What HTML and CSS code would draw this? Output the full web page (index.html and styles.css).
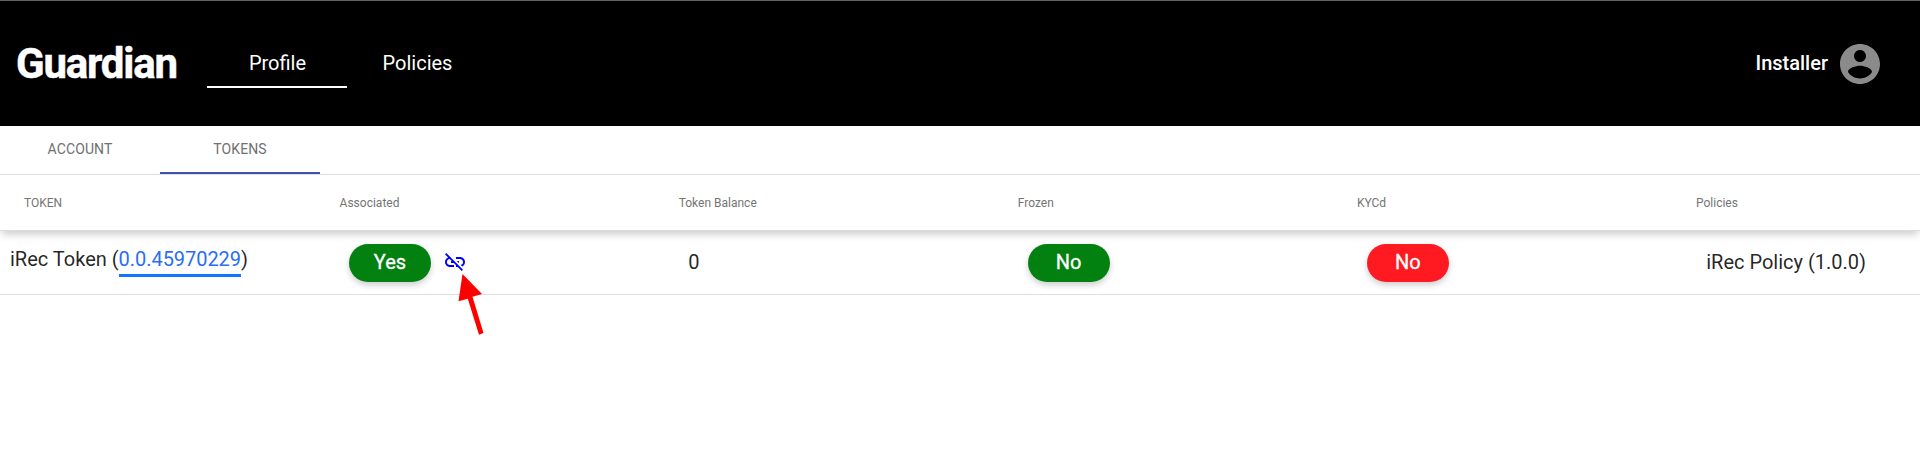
FILE: index.html
```html
<!DOCTYPE html>
<html lang="en">
<head>
<meta charset="utf-8">
<title>Guardian</title>
<link rel="stylesheet" href="styles.css">
</head>
<body>
<header class="topbar">
  <div class="brand">Guardian</div>
  <nav class="nav">
    <a class="nav-link active">Profile</a>
    <a class="nav-link">Policies</a>
  </nav>
  <div class="user">
    <span class="user-name">Installer</span>
    <svg class="avatar" viewBox="0 0 24 24"><path d="M12 2C6.48 2 2 6.48 2 12s4.48 10 10 10 10-4.48 10-10S17.52 2 12 2zm0 3c1.66 0 3 1.34 3 3s-1.34 3-3 3-3-1.34-3-3 1.34-3 3-3zm0 14.2c-2.5 0-4.71-1.28-6-3.22.03-1.99 4-3.08 6-3.08 1.99 0 5.97 1.09 6 3.08-1.29 1.94-3.5 3.22-6 3.22z"/></svg>
  </div>
</header>
<div class="tabs">
  <div class="tab">ACCOUNT</div>
  <div class="tab selected">TOKENS</div>
</div>
<main class="table">
  <div class="row head">
    <div class="th">TOKEN</div>
    <div class="th">Associated</div>
    <div class="th">Token Balance</div>
    <div class="th">Frozen</div>
    <div class="th">KYCd</div>
    <div class="th">Policies</div>
  </div>
  <div class="row body">
    <div class="td token"><span>iRec Token (<a class="token-id">0.0.45970229</a>)</span></div>
    <div class="td">
      <span class="pill yes">Yes</span>
      <span class="unlink">
        <svg class="unlink-icon" viewBox="0 0 24 24"><path d="M17 7h-4v1.9h4c1.71 0 3.1 1.39 3.1 3.1 0 1.43-.98 2.63-2.31 2.98l1.46 1.46C20.88 15.61 22 13.95 22 12c0-2.76-2.24-5-5-5zm-1 4h-2.19l2 2H16zM2 4.27l3.11 3.11C3.29 8.12 2 9.91 2 12c0 2.76 2.24 5 5 5h4v-1.9H7c-1.71 0-3.1-1.39-3.1-3.1 0-1.59 1.21-2.9 2.76-3.07L8.73 11H8v2h2.73L13 15.27V17h1.73l4.01 4L20 19.74 3.27 3 2 4.27z"/></svg>
        <svg class="pointer" viewBox="0 0 28 62"><path d="M4.5 0 L24 20 L14.5 22.8 L25.5 59 L21 60.8 L9.8 24.8 L.5 27.3z"/></svg>
      </span>
    </div>
    <div class="td text">0</div>
    <div class="td"><span class="pill yes">No</span></div>
    <div class="td"><span class="pill no">No</span></div>
    <div class="td text">iRec Policy (1.0.0)</div>
  </div>
</main>
</body>
</html>
```
FILE: styles.css
```css
* { box-sizing: border-box; }
body {
  margin: 0;
  min-height: 100vh;
  background: #fff;
  font-family: Roboto, "Liberation Sans", sans-serif;
  color: rgba(0, 0, 0, .87);
}
.topbar {
  display: flex;
  align-items: center;
  height: 126px;
  padding: 0 36px 0 16px;
  border-top: 1px solid #5f6368;
  background: #000;
  color: #fff;
}
.brand {
  width: 191px;
  font-size: 42px;
  line-height: 48px;
  font-weight: 700;
  letter-spacing: -1.2px;
  -webkit-text-stroke: .5px #fff;
}
.nav { display: flex; }
.nav-link {
  width: 140px;
  height: 51px;
  padding: 1px 0 0 1px;
  margin-bottom: 2px;
  border-bottom: 2px solid transparent;
  font-size: 20px;
  line-height: 50px;
  text-align: center;
}
.nav-link.active { border-bottom-color: #fff; }
.user {
  display: flex;
  align-items: center;
  gap: 8px;
  margin-left: auto;
}
.user-name { padding-bottom: 2px; font-size: 20px; font-weight: 500; }
.avatar { width: 48px; height: 48px; fill: #8b8b8b; }
.tabs {
  display: flex;
  height: 49px;
  border-bottom: 1px solid #dedede;
}
.tab {
  width: 160px;
  height: 48px;
  border-bottom: 2px solid transparent;
  font-size: 14px;
  line-height: 47px;
  letter-spacing: .1px;
  text-align: center;
  color: #707070;
}
.tab.selected { border-bottom-color: #3f51b5; }
.row {
  display: grid;
  align-items: center;
  border-bottom: 1px solid #dedede;
}
.row.head {
  grid-template-columns: 315.6px repeat(4, 339.1px) 1fr;
  height: 56px;
  padding-left: 24px;
  box-shadow: 0 5px 8px -2px rgba(0, 0, 0, .22);
}
.th { font-size: 12px; line-height: 16px; color: #757575; }
.row.body {
  grid-template-columns: 339px repeat(4, 339.3px) 1fr;
  height: 64px;
  padding-left: 10px;
}
.td { display: flex; align-items: center; font-size: 20px; line-height: 24px; }
.td.text { padding-bottom: 2px; }
.td.token { padding-bottom: 2px; }
.token-id {
  display: inline-block;
  padding-bottom: 3px;
  border-bottom: 3px solid #1374ff;
  letter-spacing: -.05px;
  color: #2a6df0;
}
.pill {
  width: 82px;
  height: 38px;
  border-radius: 19px;
  line-height: 37px;
  letter-spacing: .1px;
  text-align: center;
  color: #fff;
  -webkit-text-stroke: .3px #fff;
  box-shadow: 0 3px 6px rgba(0, 0, 0, .2);
}
.yes { background: #028010; }
.no { background: #ff1a22; }
.unlink {
  position: relative;
  display: flex;
  margin: 0 0 2px 11.5px;
}
.unlink-icon { width: 24px; height: 24px; fill: #00f; }
.pointer {
  position: absolute;
  top: 24px;
  left: 15px;
  width: 28px;
  height: 62px;
  fill: #f00;
}
```
